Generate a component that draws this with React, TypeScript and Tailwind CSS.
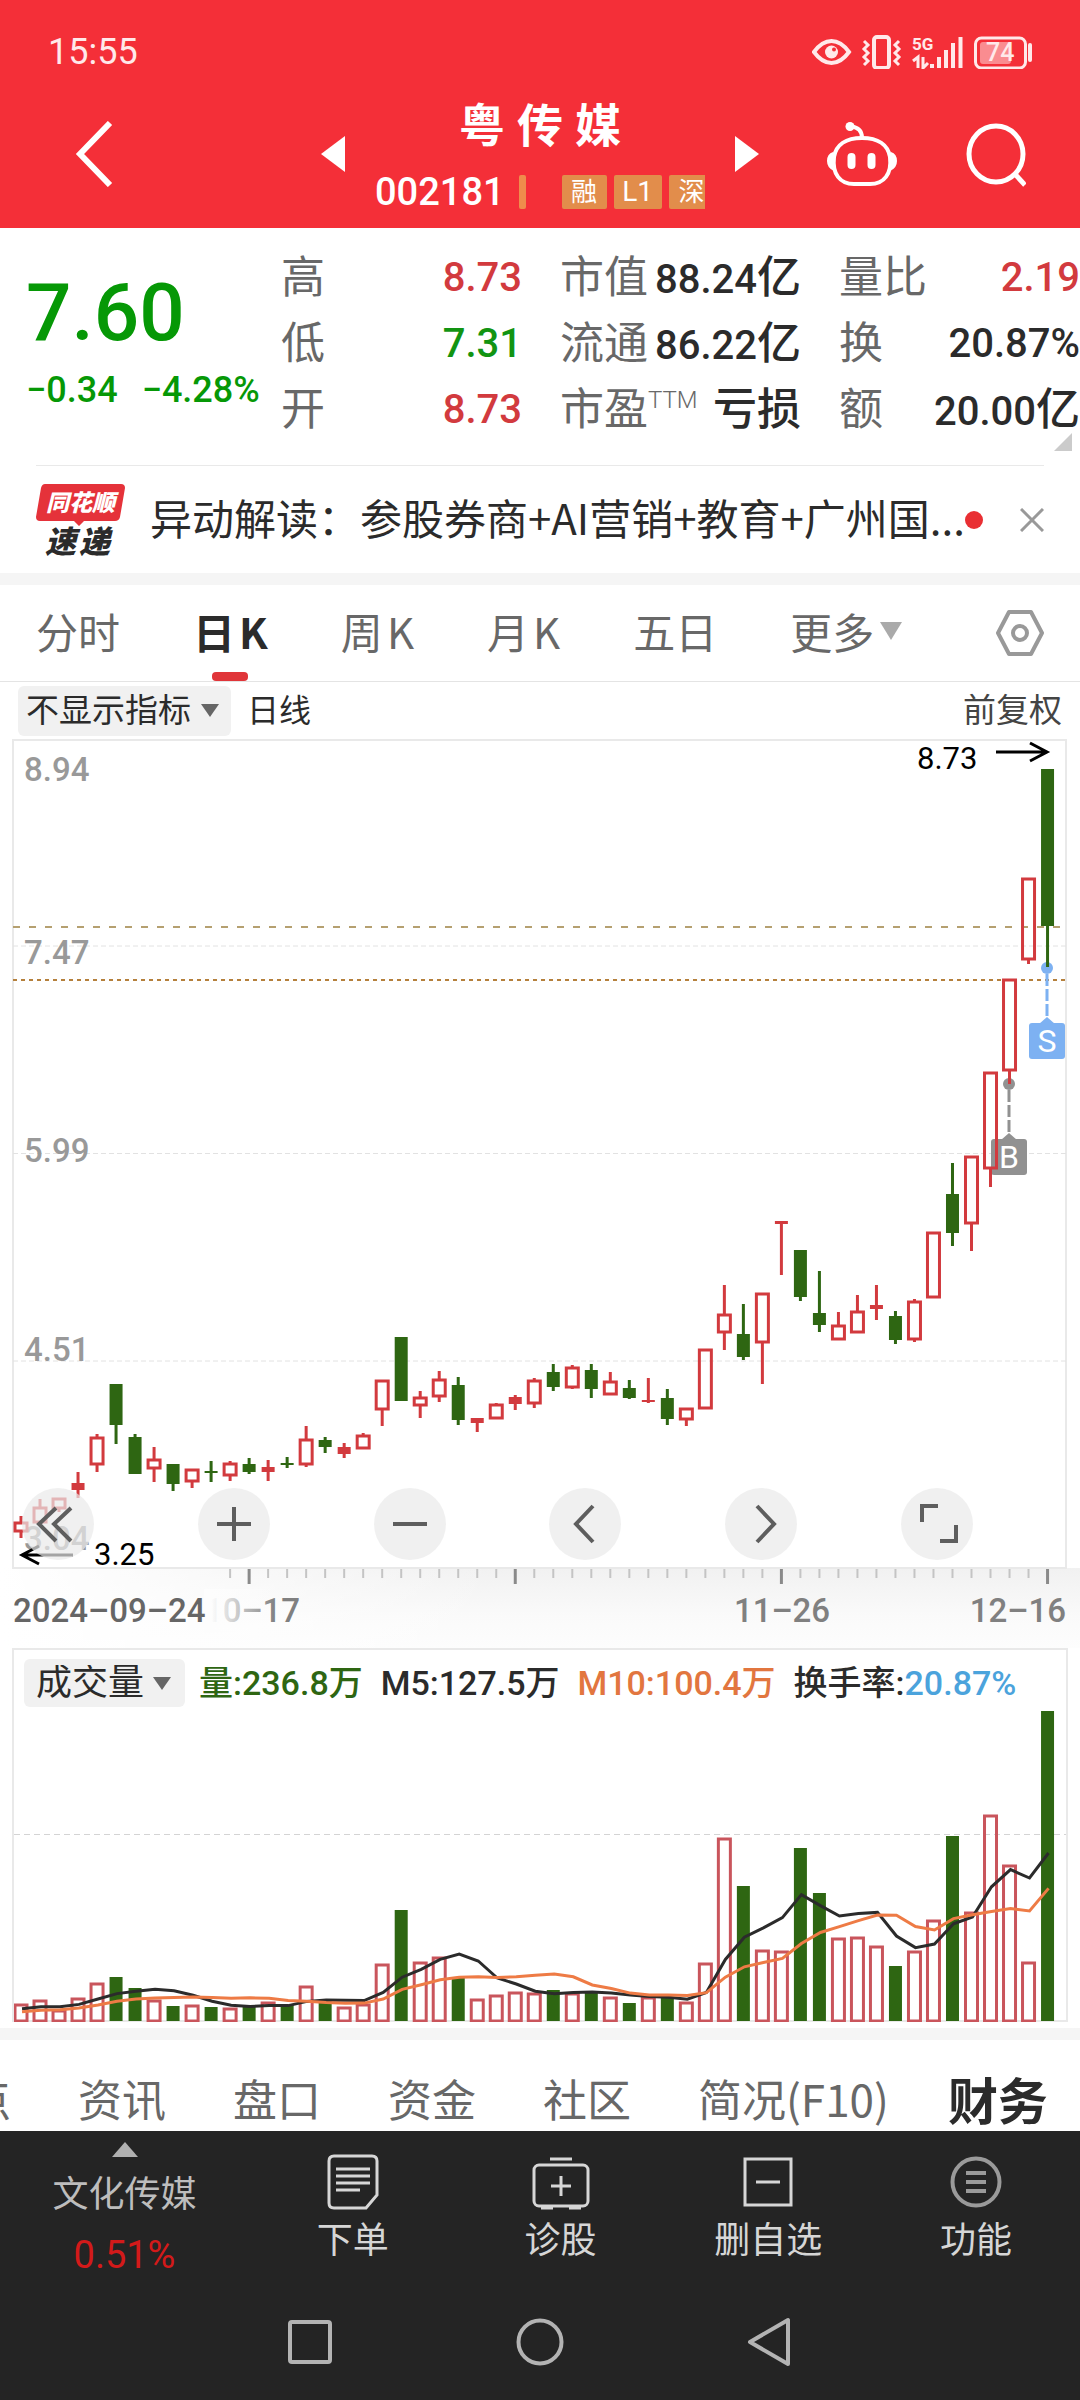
import { useState } from 'react';
import { clsx } from 'clsx';

type Candle = [up: 0 | 1, top: number, bottom: number, high: number, low: number, volume: number];

// body top / bottom, wick top / bottom and volume, one row per trading day
const candles: Candle[] = [
  [1, 783, 793, 777, 799, 17],
  [1, 768, 784, 760, 784, 21],
  [1, 759, 770, 759, 773, 11],
  [1, 744, 751, 733, 759, 23],
  [1, 698, 726, 695, 733, 38],
  [0, 645, 686, 645, 705, 44],
  [0, 698, 735, 695, 735, 33],
  [1, 720, 730, 708, 743, 21],
  [0, 725, 745, 725, 752, 15],
  [1, 730, 743, 730, 749, 16],
  [0, 732, 734, 722, 743, 14],
  [1, 724, 737, 722, 742, 13],
  [0, 725, 733, 719, 735, 15],
  [1, 728, 733, 721, 742, 19],
  [0, 724, 726, 718, 729, 16],
  [1, 700, 726, 687, 728, 35],
  [0, 701, 708, 698, 714, 20],
  [1, 708, 715, 704, 719, 14],
  [1, 696, 710, 694, 710, 17],
  [1, 641, 671, 641, 687, 57],
  [0, 598, 662, 598, 662, 111],
  [1, 658, 667, 652, 679, 59],
  [1, 640, 658, 632, 663, 64],
  [0, 646, 681, 638, 686, 44],
  [1, 679, 684, 679, 693, 22],
  [1, 665, 680, 664, 680, 26],
  [1, 658, 665, 656, 671, 29],
  [1, 641, 665, 639, 669, 28],
  [0, 633, 648, 625, 652, 31],
  [1, 628, 649, 626, 650, 28],
  [0, 631, 650, 625, 659, 29],
  [1, 642, 656, 633, 656, 24],
  [0, 649, 659, 641, 660, 18],
  [1, 661, 663, 639, 664, 24],
  [0, 659, 680, 650, 686, 24],
  [1, 669, 681, 669, 687, 19],
  [1, 610, 670, 610, 670, 58],
  [1, 575, 594, 546, 611, 183],
  [0, 595, 618, 565, 621, 135],
  [1, 554, 604, 554, 645, 71],
  [1, 482, 485, 482, 536, 70],
  [0, 511, 558, 511, 562, 173],
  [0, 574, 586, 532, 593, 128],
  [1, 586, 601, 573, 601, 83],
  [1, 572, 594, 556, 594, 84],
  [1, 566, 570, 546, 581, 75],
  [0, 577, 601, 572, 605, 55],
  [1, 562, 601, 560, 603, 70],
  [1, 493, 559, 493, 559, 101],
  [0, 455, 494, 424, 507, 185],
  [1, 417, 485, 417, 512, 109],
  [1, 333, 430, 333, 448, 206],
  [1, 240, 332, 240, 345, 156],
  [1, 139, 221, 139, 225, 59],
  [0, 30, 187, 30, 228, 310],
];

// volumes before the visible range, needed for the moving averages
const earlierVolumes = [6, 6, 6, 7, 7, 11, 11, 11, 11];

const RED = '#d23a3e';
const GREEN = '#2e6612';
const VOLUME_BASE = 313;

const xOf = (i: number) => 21 + i * 19.01;

function averageLine(days: number) {
  const all = [...earlierVolumes, ...candles.map((c) => c[5])];
  return candles
    .map((_, i) => {
      const end = i + earlierVolumes.length + 1;
      const sum = all.slice(end - days, end).reduce((a, b) => a + b, 0);
      return `${xOf(i) + 1},${VOLUME_BASE - sum / days}`;
    })
    .join(' ');
}

const stats = [
  { label: '高', value: '8.73', color: 'text-[#d23a3e]' },
  { label: '市值', value: '88.24', unit: '亿', color: 'text-[#2b2b2b]' },
  { label: '量比', value: '2.19', color: 'text-[#d23a3e]' },
  { label: '低', value: '7.31', color: 'text-[#129412]' },
  { label: '流通', value: '86.22', unit: '亿', color: 'text-[#2b2b2b]' },
  { label: '换', value: '20.87%', color: 'text-[#2b2b2b]' },
  { label: '开', value: '8.73', color: 'text-[#d23a3e]' },
  { label: '市盈', sup: 'TTM', unit: '亏损', color: 'text-[#2b2b2b]' },
  { label: '额', value: '20.00', unit: '亿', color: 'text-[#2b2b2b]' },
];

const periods = ['分时', '日K', '周K', '月K', '五日'];
const sections = ['看点', '资讯', '盘口', '资金', '社区', '简况(F10)', '财务'];

function StatusBar() {
  return (
    <div className="flex h-20 items-center justify-between pt-6 pl-12 pr-[46px]">
      <span className="text-4xl leading-none text-[#ffe9ea]">15:55</span>
      <svg width="222" height="34" viewBox="0 0 222 34" fill="none" stroke="#ffe9ea" aria-hidden="true">
        <path d="M2 17Q10 6 19.500 6T37 17Q29 28 19.500 28T2 17Z" strokeWidth="4" />
        <circle cx="19.500" cy="17" r="6.500" fill="#ffe9ea" stroke="none" />
        <circle cx="22" cy="14.500" r="2" fill="#f42f38" stroke="none" />
        <rect x="62" y="2" width="15" height="31" rx="3" strokeWidth="4" />
        <path d="M52 6l4 4-4 4 4 4-4 4 4 4-4 4M87 6l-4 4 4 4-4 4 4 4-4 4 4 4" strokeWidth="3" />
        <text x="100" y="15" fontSize="17" fontWeight="700" fill="#ffe9ea" stroke="none">5G</text>
        <path d="M101 26l5-4v11M111 22v11l5-5" strokeWidth="3" />
        <path d="M120 29v4M127 22v11M134 15v18M141 8v25M148.500 2v31" strokeWidth="4" />
        <rect x="163.500" y="3" width="50" height="30" rx="6" strokeWidth="3" />
        <rect x="168" y="7" width="31" height="22" rx="3" fill="#fa8c90" stroke="none" />
        <text x="174" y="26" fontSize="25" fontWeight="500" fill="#ffe9ea" stroke="none">74</text>
        <path d="M218 10v15" strokeWidth="4" strokeLinecap="round" />
      </svg>
    </div>
  );
}

function Header() {
  return (
    <header className="bg-[#f42f38] text-white">
      <StatusBar />
      <div className="grid h-[148px] grid-cols-[1fr_auto_1fr] items-center">
        <button aria-label="返回" className="ml-[74px] justify-self-start">
          <svg width="40" height="66" viewBox="0 0 40 66" fill="none" stroke="currentColor" strokeWidth="6">
            <path d="M36 2L6 33l30 31" />
          </svg>
        </button>
        <div className="flex items-center">
          <button aria-label="上一只">
            <svg width="24" height="36" viewBox="0 0 24 36" fill="currentColor"><path d="M0 18L24 0v36z" /></svg>
          </button>
          <div className="mx-[30px] w-[330px]">
            <h1 className="text-center font-[family-name:'Open_Sans','Noto_Sans_CJK_SC',sans-serif] text-[46px] font-bold leading-[52px]">粤 传 媒</h1>
            <div className="mt-6 flex h-9 items-center text-[26px] leading-none">
              <span className="text-[38px] font-medium">002181</span>
              <span className="ml-3.5 h-[34px] w-[7px] shrink-0 rounded-xs bg-[#ef8c4c]" />
              <span className="ml-9 flex h-[34px] w-[45px] shrink-0 items-center justify-center rounded-xs bg-[#e28d4b]">融</span>
              <span className="ml-[7px] flex h-[34px] w-12 shrink-0 items-center justify-center rounded-xs bg-[#e28d4b] text-[28px]">L1</span>
              <span className="ml-[7px] flex h-[34px] w-9 shrink-0 items-center justify-end rounded-l-xs bg-[#e28d4b]">深</span>
            </div>
          </div>
          <button aria-label="下一只">
            <svg width="24" height="36" viewBox="0 0 24 36" fill="currentColor"><path d="M24 18L0 0v36z" /></svg>
          </button>
        </div>
        <div className="mr-[54px] flex items-center gap-[68px] justify-self-end">
          <button aria-label="智能助手">
            <svg width="72" height="66" viewBox="0 0 72 66" fill="none" stroke="currentColor" strokeWidth="4">
              <path d="M36 17C20 17 10 24 8 36C6 53 14 63 28 63H44C58 63 66 53 64 36C62 24 52 17 36 17Z" />
              <path d="M36 17C36 9 32 7 25 5" />
              <circle cx="24" cy="5.500" r="4.500" fill="currentColor" stroke="none" />
              <path d="M7 31Q1 33 1 40T8 50ZM65 31Q71 33 71 40T64 50Z" fill="currentColor" stroke="none" />
              <path d="M25.500 36v8M45.500 36v8" strokeWidth="8" strokeLinecap="round" />
            </svg>
          </button>
          <button aria-label="搜索">
            <svg width="60" height="66" viewBox="0 0 60 66" fill="none" stroke="currentColor" strokeWidth="5">
              <ellipse cx="30" cy="33" rx="27" ry="28" />
              <path d="M48 52l11 12" />
            </svg>
          </button>
        </div>
      </div>
    </header>
  );
}

function Quote() {
  return (
    <section className="relative flex pt-[17px] pb-[22px]">
      <div className="w-[281px] shrink-0 pt-7 pl-[26px] font-medium text-[#069806]">
        <p className="text-[80px] leading-20">7.60</p>
        <p className="mt-[15px] flex gap-6 text-4xl leading-11">
          <span>−0.34</span>
          <span>−4.28%</span>
        </p>
      </div>
      <dl className="grid flex-1 grid-cols-3 gap-x-[38px]">
        {stats.map((item) => (
          <div key={item.label} className="flex h-[66px] items-center justify-between whitespace-nowrap">
            <dt className="flex text-[44px] leading-none text-[#686868]">
              {item.label}
              {item.sup && <sup className="top-0 font-light text-2xl leading-none">{item.sup}</sup>}
            </dt>
            <dd className={clsx('text-[40px] font-medium leading-none', item.color)}>
              {item.value}
              {item.unit && <span className="text-[44px]">{item.unit}</span>}
            </dd>
          </div>
        ))}
      </dl>
      <svg className="absolute right-2 bottom-3.5" width="18" height="18" viewBox="0 0 18 18" aria-hidden="true">
        <path d="M18 0v18H0z" fill="#cbcbcb" />
      </svg>
    </section>
  );
}

function News() {
  return (
    <section className="mx-9 flex h-[108px] items-center border-t border-[#e9e9e9]">
      <svg className="shrink-0 overflow-visible font-[family-name:'Noto_Sans_CJK_SC',sans-serif]" width="90" height="74" viewBox="0 0 90 74" role="img" aria-label="同花顺速递">
        <path d="M9 1h76q4 0 4 4l-5 29q-1 4-5 4H48l-5 5-5-5H4q-4 0-4-4L5 5q1-4 4-4z" fill="#e5323a" />
        <text x="10" y="28" fontSize="23" fontWeight="900" fontStyle="italic" fill="#fff">同花顺</text>
        <text x="9 43" y="70" fontSize="31" fontWeight="900" fontStyle="italic" fill="#2b2b2b">速递</text>
      </svg>
      <a href="#news" className="ml-6 pb-1.5 whitespace-nowrap font-[family-name:'Noto_Sans_CJK_SC',sans-serif] text-[42px] leading-[60px] text-[#2b2b2b]">
        异动解读：参股券商+AI营销+教育+广州国...
      </a>
      <span className="size-[18px] shrink-0 rounded-full bg-[#e92f33]" />
      <button aria-label="关闭" className="ml-auto">
        <svg width="24" height="24" viewBox="0 0 24 24" stroke="#999" strokeWidth="3"><path d="M1 1l22 22M23 1L1 23" /></svg>
      </button>
    </section>
  );
}

function PeriodTabs() {
  const [active, setActive] = useState('日K');
  return (
    <nav className="flex h-[97px] items-stretch gap-[73px] border-b border-[#e4e4e4] px-9 font-[family-name:'Noto_Sans_CJK_SC',sans-serif] text-[42px] leading-none text-[#686868]">
      {periods.map((name) => (
        <button
          key={name}
          onClick={() => setActive(name)}
          className={clsx('relative flex shrink-0 items-center pb-1', name === active && 'font-bold text-[#2b2b2b]')}
        >
          {name[0]}
          <span className={name[1] === 'K' ? 'ml-1' : ''}>{name[1]}</span>
          {name === active && (
            <span className="absolute bottom-0 left-1/2 h-[9px] w-9 -translate-x-1/2 rounded-sm bg-[#e03539]" />
          )}
        </button>
      ))}
      <button className="flex shrink-0 items-center gap-1.5 pb-1">
        更多
        <svg width="22" height="18" viewBox="0 0 22 18" fill="#aaa"><path d="M0 0h22L11 18z" /></svg>
      </button>
      <button aria-label="设置" className="ml-auto">
        <svg width="48" height="46" viewBox="0 0 48 46" fill="none" stroke="#999" strokeWidth="4" strokeLinejoin="round">
          <path d="M13 2h22l11 21-11 21H13L2 23z" />
          <circle cx="24" cy="23" r="7" />
        </svg>
      </button>
    </nav>
  );
}

function Marker({ x, dot, box, letter, color }: { x: number; dot: number; box: number; letter: string; color: string }) {
  return (
    <g>
      <circle cx={x} cy={dot} r="6" fill={color} />
      <path d={`M${x} ${dot + 6}V${box - 5}`} stroke={color} strokeWidth="3" strokeDasharray="12 3" />
      <path d={`M${x} ${box - 6}l8 7h-16z`} fill={color} />
      <rect x={x - 18} y={box} width="36" height="36" rx="3" fill={color} />
      <text x={x} y={box + 29} fontSize="32" fill="#fff" textAnchor="middle">{letter}</text>
    </g>
  );
}

function PriceChart() {
  return (
    <svg className="block w-full" viewBox="0 0 1080 909" role="img" aria-label="日K线图">
      <defs>
        <linearGradient id="axis" x1="0" y1="0" x2="0" y2="1">
          <stop offset="0" stopColor="#f1f1f1" />
          <stop offset="0.6" stopColor="#fafafa" />
          <stop offset="1" stopColor="#fdfdfd" />
        </linearGradient>
        <linearGradient id="axisFade">
          <stop offset="0" stopColor="#fff" />
          <stop offset="1" stopColor="#fff" stopOpacity="0" />
        </linearGradient>
        <linearGradient id="labelFade">
          <stop offset="0.1" stopColor="#fdfdfd" />
          <stop offset="1" stopColor="#fdfdfd" stopOpacity="0" />
        </linearGradient>
      </defs>
      <rect x="0" y="829" width="1080" height="80" fill="url(#axis)" />
      <rect x="0" y="829" width="500" height="80" fill="url(#axisFade)" />
      <rect x="13" y="1" width="1053" height="828" fill="#fff" stroke="#e9e9e9" strokeWidth="2" />
      <path d="M13 207H1066M13 414.500H1066M13 622H1066" stroke="#e2e2e2" strokeDasharray="5 3" />
      <path d="M13 188H1066" stroke="#b5a070" strokeWidth="2" strokeDasharray="7 9" />
      <path d="M13 241H1066" stroke="#b5803c" strokeWidth="2" strokeDasharray="4 4" />

      <g fontSize="33" fontWeight="500" fill="#999">
        <text x="24" y="42">8.94</text>
        <text x="24" y="225">7.47</text>
        <text x="24" y="423">5.99</text>
        <text x="24" y="622">4.51</text>
        <text x="24" y="811">3.04</text>
      </g>

      <Marker x={1047} dot={229} box={284} letter="S" color="#7db1f2" />
      <Marker x={1009} dot={345} box={400} letter="B" color="#919191" />

      {candles.map(([up, top, bottom, high, low], i) => {
        const x = xOf(i);
        const color = up ? RED : GREEN;
        const hollow = up === 1 && bottom - top > 7;
        return (
          <g key={i}>
            <path d={`M${x} ${high}V${top}M${x} ${bottom}V${low}`} stroke={color} strokeWidth="3" />
            {hollow ? (
              <rect x={x - 6} y={top + 1} width="12" height={bottom - top - 2} fill="none" stroke={color} strokeWidth="3" />
            ) : (
              <rect x={x - 6.5} y={top} width="13" height={bottom - top} fill={color} />
            )}
          </g>
        );
      })}

      <g fill="none" stroke="#000" strokeWidth="3">
        <path d="M996 13h50M1030 4l17 9-17 9" />
        <path d="M73 816H24M39 807l-17 9 17 9" />
      </g>
      <text x="917" y="30" fontSize="31">8.73</text>
      <text x="94" y="826" fontSize="31">3.25</text>

      {candles.map((_, i) => {
        if (i < 11) return null;
        const major = (i - 12) % 14 === 0;
        return (
          <path
            key={i}
            d={`M${xOf(i)} 830v${major ? 15 : 9}`}
            stroke={major ? '#8a8a8a' : '#c4c4c4'}
            strokeWidth={major ? 3 : 2}
          />
        );
      })}
      <g fontSize="33" fontWeight="500" fill="#808080">
        <text x="252" y="883" textAnchor="middle">10–17</text>
        <text x="782" y="883" textAnchor="middle">11–26</text>
        <text x="1066" y="883" textAnchor="end">12–16</text>
        <rect x="204" y="850" width="72" height="44" fill="url(#labelFade)" />
        <text x="13" y="883" fill="#666">2024–09–24</text>
      </g>
    </svg>
  );
}

const controls = [
  { label: '最早', d: 'M24 10L7 26l17 17M39 10L22 26l17 17' },
  { label: '放大', d: 'M26 9v34M9 26h34' },
  { label: '缩小', d: 'M9 26h34' },
  { label: '左移', d: 'M34 8L17 26l17 18' },
  { label: '右移', d: 'M22 8l17 18-17 18' },
  { label: '全屏', d: 'M11 24V8h16M45 27v16H29' },
];

function ChartPanel() {
  return (
    <section>
      <div className="flex h-[57px] items-center px-[18px] text-[#2b2b2b]">
        <label className="relative flex items-center">
          <span className="sr-only">指标</span>
          <select className="h-[50px] appearance-none rounded-md bg-[#f1f1f1] pr-10 pl-2 text-[33px] leading-none">
            <option>不显示指标</option>
          </select>
          <svg className="pointer-events-none absolute right-3" width="18" height="13" viewBox="0 0 18 13" fill="#666">
            <path d="M0 0h18L9 13z" />
          </svg>
        </label>
        <span className="ml-4 text-[32px] leading-none">日线</span>
        <button className="ml-auto text-[33px] leading-none text-[#444]">前复权</button>
      </div>
      <div className="relative">
        <PriceChart />
        <div className="absolute inset-x-0 top-[749px] flex justify-between pr-[107px] pl-[22px]">
          {controls.map((c) => (
            <button key={c.label} aria-label={c.label} className="flex size-[72px] items-center justify-center rounded-full bg-[#e9e9e9]/70">
              <svg width="52" height="52" viewBox="0 0 52 52" fill="none" stroke="#5e5e5e" strokeWidth="4">
                <path d={c.d} />
              </svg>
            </button>
          ))}
        </div>
      </div>
    </section>
  );
}

function VolumePanel() {
  return (
    <section className="pb-1.5">
      <div className="mx-3 border-x-2 border-t-2 border-[#e9e9e9]">
        <div className="flex h-[58px] items-center gap-[18px] whitespace-nowrap pt-2 pl-2.5 text-[34px] font-medium leading-none text-[#2b2b2b]">
          <label className="relative -mr-1 flex items-center font-normal">
            <span className="sr-only">副图指标</span>
            <select className="h-12 appearance-none rounded-md bg-[#f1f1f1] pr-10 pl-3 text-4xl leading-none">
              <option>成交量</option>
            </select>
            <svg className="pointer-events-none absolute right-3.5" width="18" height="13" viewBox="0 0 18 13" fill="#666">
              <path d="M0 0h18L9 13z" />
            </svg>
          </label>
          <span className="text-[#2e6612]">量:236.8万</span>
          <span>M5:127.5万</span>
          <span className="text-[#e2763f]">M10:100.4万</span>
          <span>换手率:<span className="text-[#4ba3dc]">20.87%</span></span>
        </div>
        <svg className="block w-full" viewBox="14 0 1052 314" role="img" aria-label="成交量">
          <path d="M14 126.500H1066" stroke="#d4d4d4" strokeDasharray="6 4" />
          <path d="M14 313H1066" stroke="#e9e9e9" strokeWidth="2" />
          {candles.map(([up, , , , , v], i) =>
            up ? (
              <rect key={i} x={xOf(i) - 6} y={VOLUME_BASE + 1 - v} width="12" height={v - 1} fill="none" stroke="#c9555c" strokeWidth="3" />
            ) : (
              <rect key={i} x={xOf(i) - 6.5} y={VOLUME_BASE - v} width="13" height={v} fill={GREEN} />
            ),
          )}
          <polyline points={averageLine(5)} fill="none" stroke="#2b2b2b" strokeWidth="3" />
          <polyline points={averageLine(10)} fill="none" stroke="#ee7b45" strokeWidth="3" />
        </svg>
      </div>
    </section>
  );
}

function SectionTabs() {
  return (
    <nav className="h-[91px] overflow-hidden pt-7 font-[family-name:'Noto_Sans_CJK_SC',sans-serif] text-[44px] leading-[60px] text-[#686868]">
      <div className="-ml-[77px] flex gap-[67px] whitespace-nowrap">
        {sections.map((name) => (
          <button key={name} className={clsx('shrink-0', name === '财务' && '-ml-2 text-[50px] font-bold text-[#2b2b2b]')}>
            {name}
          </button>
        ))}
      </div>
    </nav>
  );
}

function Actions() {
  return (
    <div className="flex h-[150px] text-4xl text-[#d6d6d6]">
      <button className="flex w-[249px] shrink-0 flex-col items-center pt-[11px] text-[#bdbdbd]">
        <svg width="26" height="15" viewBox="0 0 26 15" fill="#b0b0b0"><path d="M13 0l13 15H0z" /></svg>
        <span className="mt-3.5 leading-12">文化传媒</span>
        <span className="mt-3 text-[38px] leading-12 text-[#d31a1a]">0.51%</span>
      </button>
      <button className="flex flex-1 flex-col items-center pt-[22px]">
        <svg width="60" height="58" viewBox="0 0 60 58" fill="none" stroke="currentColor" strokeWidth="3">
          <path d="M11 3h38q5 0 5 5v34L43 55H11q-5 0-5-5V8q0-5 5-5z" />
          <path d="M13 16h34M13 23h34M13 30h34M13 37h24" />
        </svg>
        <span className="mt-1.5 leading-12">下单</span>
      </button>
      <button className="flex flex-1 flex-col items-center pt-[22px]">
        <svg width="60" height="58" viewBox="0 0 60 58" fill="none" stroke="currentColor" strokeWidth="3">
          <rect x="3" y="12" width="54" height="41" rx="5" />
          <path d="M19 6h22M30 23v20M20 33h20M10 55h12M38 55h12" />
        </svg>
        <span className="mt-1.5 leading-12">诊股</span>
      </button>
      <button className="flex flex-1 flex-col items-center pt-[22px]">
        <svg width="60" height="58" viewBox="0 0 60 58" fill="none" stroke="currentColor" strokeWidth="3">
          <path d="M7 6h46v46H7zM18 29h24" />
        </svg>
        <span className="mt-1.5 leading-12">删自选</span>
      </button>
      <button className="flex flex-1 flex-col items-center pt-[22px]">
        <svg width="60" height="58" viewBox="0 0 60 58" fill="none" stroke="#9a9a9a" strokeWidth="4">
          <circle cx="30" cy="29" r="23.500" />
          <path d="M20 20h20M20 29h20M20 38h20" />
        </svg>
        <span className="mt-1.5 leading-12">功能</span>
      </button>
    </div>
  );
}

function SystemNav() {
  return (
    <div className="flex h-[119px] items-center justify-center gap-[182px] pt-[3px]">
      <button aria-label="最近任务">
        <svg width="48" height="50" viewBox="0 0 48 50" fill="none" stroke="#b3b3b3" strokeWidth="4">
          <rect x="4" y="5" width="40" height="40" rx="2" />
        </svg>
      </button>
      <button aria-label="主页">
        <svg width="48" height="50" viewBox="0 0 48 50" fill="none" stroke="#b3b3b3" strokeWidth="4">
          <circle cx="24" cy="25" r="21.500" />
        </svg>
      </button>
      <button aria-label="系统返回">
        <svg width="48" height="50" viewBox="0 0 48 50" fill="none" stroke="#b3b3b3" strokeWidth="4" strokeLinejoin="round">
          <path d="M42 3v44L4 25z" />
        </svg>
      </button>
    </div>
  );
}

export default function App() {
  return (
    <div lang="zh-CN" className="w-full overflow-hidden bg-white font-[family-name:Roboto,'Noto_Sans_CJK_SC',sans-serif] text-black">
      <Header />
      <Quote />
      <News />
      <div className="h-3 bg-[#f5f5f5]" />
      <PeriodTabs />
      <ChartPanel />
      <VolumePanel />
      <div className="h-3 bg-[#f5f5f5]" />
      <SectionTabs />
      <footer className="bg-[#242424]">
        <Actions />
        <SystemNav />
      </footer>
    </div>
  );
}
